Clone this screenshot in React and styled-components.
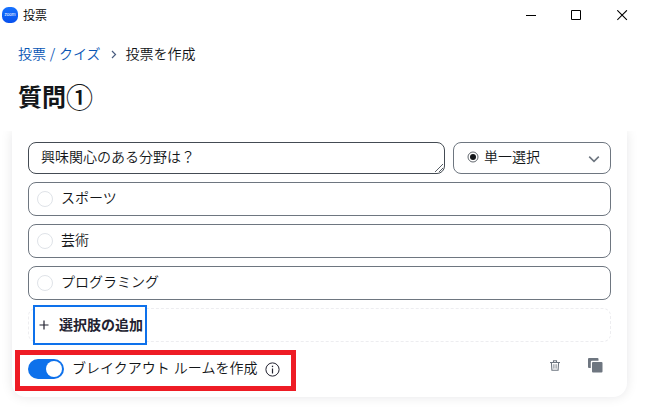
import { useState } from "react";
import styled, { createGlobalStyle } from "styled-components";

const GlobalStyle = createGlobalStyle`
  * {
    box-sizing: border-box;
  }
  body {
    margin: 0;
    overflow: hidden;
    background-color: #ffffff;
    color: #131619;
    font-family: "Noto Sans CJK JP", sans-serif;
    font-size: 14px;
    font-weight: 350;
  }
`;

const options = ["スポーツ", "芸術", "プログラミング"];

function TitleBar() {
  return (
    <STitleBar>
      <SLogo>zoom</SLogo>
      <SAppName>投票</SAppName>
      <SWindowButtons>
        <svg width="11" height="11" viewBox="0 0 11 11" fill="none" stroke="#000000">
          <path d="M0 5.5h10" />
        </svg>
        <svg width="11" height="11" viewBox="0 0 11 11" fill="none" stroke="#000000">
          <path d="M.5 .5h9v9h-9z" />
        </svg>
        <svg width="11" height="11" viewBox="0 0 11 11" fill="none" stroke="#000000" strokeWidth="1.1">
          <path d="M.3 .3l9.6 9.6M9.9 .3l-9.6 9.6" />
        </svg>
      </SWindowButtons>
    </STitleBar>
  );
}

function App() {
  const [breakout, setBreakout] = useState(true);

  return (
    <>
      <GlobalStyle />
      <SWindow>
        <TitleBar />
        <SBreadcrumb>
          <SLink>投票 / クイズ</SLink>
          <svg width="6" height="9" viewBox="0 0 6 9" fill="none" stroke="#4a5d80" strokeWidth="1.2">
            <path d="M1 1l3.5 3.5L1 8" />
          </svg>
          <span>投票を作成</span>
        </SBreadcrumb>
        <SHeading>
          <span>質問</span>
          <SNumber>①</SNumber>
        </SHeading>
        <SScrollArea>
          <SCard>
            <SQuestionRow>
              <SQuestion>
                興味関心のある分野は？
                <SGrip width="10" height="10" viewBox="0 0 10 10" fill="none" stroke="#444b53" strokeWidth="0.9">
                  <path d="M1 9L9 1M5 9l4-4" />
                </SGrip>
              </SQuestion>
              <SSelect>
                <svg width="12" height="12" viewBox="0 0 12 12" fill="none">
                  <circle cx="6" cy="6" r="5" stroke="#50565c" strokeWidth="0.9" />
                  <circle cx="6" cy="6" r="3" fill="#131619" />
                </svg>
                <SSelectLabel>単一選択</SSelectLabel>
                <svg width="12" height="8" viewBox="0 0 12 8" fill="none" stroke="#6e7680" strokeWidth="1.6">
                  <path d="M1.2 1.7L6 6.3l4.8-4.6" />
                </svg>
              </SSelect>
            </SQuestionRow>
            {options.map((option) => (
              <SOption key={option}>
                <SRadio />
                <span>{option}</span>
              </SOption>
            ))}
            <SAddRow>
              <SAddButton>
                <svg width="10" height="10" viewBox="0 0 10 10" fill="none" stroke="#222230" strokeWidth="1.2">
                  <path d="M.5 5h9M5 .5v9" />
                </svg>
                <span>選択肢の追加</span>
              </SAddButton>
            </SAddRow>
            <SFooter>
              <SToggle $on={breakout} onClick={() => setBreakout(!breakout)} />
              <SToggleLabel>ブレイクアウト ルームを作成</SToggleLabel>
              <svg width="15" height="15" viewBox="0 0 15 15" fill="none" stroke="#222230">
                <circle cx="7.5" cy="7.5" r="6.6" />
                <path d="M7.5 6.5v5" strokeWidth="1.2" />
                <path d="M7.5 3.7v1.4" strokeWidth="1.3" />
              </svg>
              <SActions>
                <svg width="10" height="12" viewBox="0 0 10 12" fill="none" stroke="#6e7680">
                  <path d="M0 3.5h10M3.5 3.2V1.8h3v1.4M1.4 3.5l.5 7.8h6.2l.5-7.8" strokeWidth="1.1" />
                  <path d="M3.9 5.2v4.4M6.1 5.2v4.4" strokeWidth="0.9" />
                </svg>
                <svg width="15" height="15" viewBox="0 0 15 15" fill="#6e7680">
                  <path d="M1 0h8.500q1 0 1 1v1.800H4q-1.200 0-1.200 1.200V10H1q-1 0-1-1V1q0-1 1-1z" />
                  <rect x="4" y="4" width="10.500" height="10.500" rx="1" />
                </svg>
              </SActions>
              <SMarker />
            </SFooter>
          </SCard>
        </SScrollArea>
      </SWindow>
    </>
  );
}

export default App;

const SWindow = styled.div`
  width: 645px;
  height: 412px;
  display: flex;
  flex-direction: column;
`;
const STitleBar = styled.div`
  height: 30px;
  display: flex;
  align-items: center;
  padding: 0 17px 0 2px;
`;
const SLogo = styled.div`
  width: 16px;
  height: 16px;
  border-radius: 6.5px;
  background: linear-gradient(#1672ff, #0750ed);
  color: #ffffff;
  font: 4.5px/15px "Liberation Sans", sans-serif;
  text-align: center;
`;
const SAppName = styled.span`
  margin-left: 5px;
  color: #000000;
  font-size: 12px;
  line-height: 18px;
`;
const SWindowButtons = styled.div`
  margin-left: auto;
  display: flex;

  svg + svg {
    margin-left: 34px;
  }
  svg:last-child {
    margin-left: 35px;
  }
`;
const SBreadcrumb = styled.div`
  height: 46px;
  display: flex;
  align-items: center;
  padding-left: 18px;
  line-height: 20px;

  svg {
    margin: 2px 9px 0 10px;
  }
`;
const SLink = styled.span`
  color: #0956b5;
  word-spacing: 0.6px;
`;
const SHeading = styled.h1`
  height: 55px;
  display: flex;
  margin: 0;
  padding: 2px 0 0 18px;
  font-size: 24px;
  font-weight: 700;
  line-height: 36px;
`;
const SNumber = styled.span`
  padding-top: 1px;
  font-size: 27px;
  font-weight: 500;
`;
const SScrollArea = styled.div`
  flex: 1;
  overflow: hidden;
  padding: 0 18px 15px 12px;
`;
const SCard = styled.div`
  height: 266px;
  display: flex;
  flex-direction: column;
  gap: 8px;
  padding: 11px 16px 0;
  background-color: #ffffff;
  border-radius: 0 0 14px 14px;
  box-shadow: 0 0 12px rgba(19, 22, 25, 0.1);
`;
const SQuestionRow = styled.div`
  display: flex;
  gap: 8px;
`;
const SQuestion = styled.div`
  position: relative;
  width: 417px;
  height: 32px;
  padding-left: 12px;
  border: 1px solid #444b53;
  border-radius: 8px;
  line-height: 27px;
`;
const SGrip = styled.svg`
  position: absolute;
  right: 0;
  bottom: 0;
`;
const SSelect = styled.div`
  flex: 1;
  height: 32px;
  display: flex;
  align-items: center;
  padding: 0 10px 2px 13px;
  border: 1px solid #6e7680;
  border-radius: 8px;

  svg:last-child {
    margin-left: auto;
    margin-top: 3px;
  }
`;
const SSelectLabel = styled.span`
  margin-left: 5px;
  padding-bottom: 2px;
`;
const SOption = styled.div`
  height: 34px;
  flex-shrink: 0;
  display: flex;
  align-items: center;
  padding-left: 8px;
  border: 1px solid #6e7680;
  border-radius: 8px;

  span {
    margin-left: 8px;
    line-height: 20px;
    padding-bottom: 4px;
  }
`;
const SRadio = styled.div`
  width: 16px;
  height: 16px;
  border: 1px solid #dfe3e8;
  border-radius: 50%;
`;
const SAddRow = styled.div`
  height: 34px;
  flex-shrink: 0;
  display: flex;
  align-items: center;
  padding-left: 4px;
  border: 1px dashed #ededf0;
  border-radius: 8px;
`;
const SAddButton = styled.button`
  width: 114px;
  height: 40px;
  flex-shrink: 0;
  display: flex;
  align-items: center;
  gap: 10px;
  padding: 0 0 0 4px;
  border: 2px solid #0e71eb;
  background-color: #ffffff;
  color: #222230;
  font: 700 14px "Noto Sans CJK JP", sans-serif;
  white-space: nowrap;

  span {
    padding-bottom: 2px;
  }
`;
const SFooter = styled.div`
  position: relative;
  height: 38px;
  display: flex;
  align-items: center;
`;
const SToggle = styled.button`
  width: 36px;
  height: 20px;
  display: flex;
  justify-content: ${({ $on }) => ($on ? "flex-end" : "flex-start")};
  padding: 2px;
  border: 0;
  border-radius: 10px;
  background-color: ${({ $on }) => ($on ? "#0e71eb" : "#98a0a9")};

  &::after {
    content: "";
    width: 16px;
    height: 16px;
    border-radius: 50%;
    background-color: #ffffff;
  }
`;
const SToggleLabel = styled.span`
  margin: 0 8px;
  line-height: 20px;
  padding-bottom: 4px;
  word-spacing: 1px;
`;
const SActions = styled.div`
  margin-left: auto;
  display: flex;
  align-items: center;
  gap: 28px;
  padding: 0 8px 8px 0;
`;
const SMarker = styled.div`
  position: absolute;
  left: -13px;
  top: 0;
  width: 281px;
  height: 41px;
  border: 5px solid #ee1c25;
`;
